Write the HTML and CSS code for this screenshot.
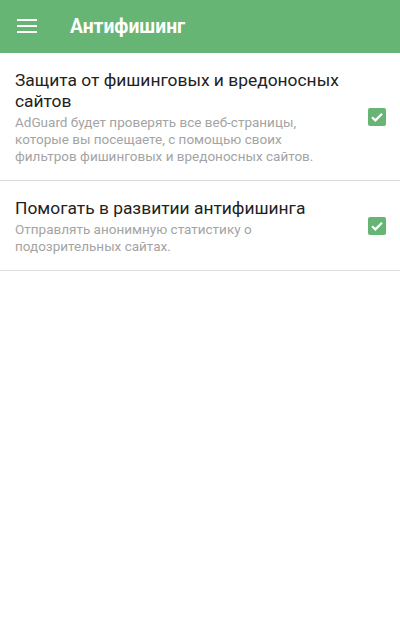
FILE: index.html
```html
<!DOCTYPE html>
<html lang="ru">
<head>
    <meta charset="UTF-8">
    <meta name="viewport" content="width=device-width, initial-scale=1.0">
    <title>Антифишинг</title>
    <link rel="stylesheet" href="styles.css">
</head>
<body>
    <header class="toolbar">
        <svg class="menu-icon" width="20" height="14" viewBox="0 0 20 14">
            <rect x="0" y="0" width="20" height="2" fill="#fff"/>
            <rect x="0" y="6" width="20" height="2" fill="#fff"/>
            <rect x="0" y="12" width="20" height="2" fill="#fff"/>
        </svg>
        <h1 class="toolbar-title">Антифишинг</h1>
    </header>

    <main class="settings">
        <div class="setting">
            <div class="setting-text">
                <div class="setting-title">Защита от фишинговых и вредоносных сайтов</div>
                <div class="setting-summary">AdGuard будет проверять все веб-страницы, которые вы посещаете, с помощью своих фильтров фишинговых и вредоносных сайтов.</div>
            </div>
            <span class="checkbox">
                <svg width="18" height="18" viewBox="0 0 18 18">
                    <path d="M4 9.2 L7.4 12.4 L14 5.8" fill="none" stroke="#fff" stroke-width="2.2"/>
                </svg>
            </span>
        </div>

        <div class="setting">
            <div class="setting-text">
                <div class="setting-title">Помогать в развитии антифишинга</div>
                <div class="setting-summary">Отправлять анонимную статистику о подозрительных сайтах.</div>
            </div>
            <span class="checkbox">
                <svg width="18" height="18" viewBox="0 0 18 18">
                    <path d="M4 9.2 L7.4 12.4 L14 5.8" fill="none" stroke="#fff" stroke-width="2.2"/>
                </svg>
            </span>
        </div>
    </main>
</body>
</html>
```

FILE: styles.css
```css
body {
    margin: 0;
    font-family: Roboto, "Noto Sans", sans-serif;
    background-color: #fff;
}

.toolbar {
    display: flex;
    align-items: center;
    height: 53px;
    padding-left: 17px;
    background-color: #66b574; /* adguard green */
    color: #fff;
}

.menu-icon {
    display: block;
    margin-top: -1px;
}

.toolbar-title {
    margin: 0 0 0 33px;
    font-size: 19.3px;
    font-weight: 700;
}

.setting {
    display: flex;
    align-items: center;
    padding: 17px 14px 15px 15px;
    border-bottom: 1px solid #dcdcdc;
}

.setting-text {
    flex: 1;
    padding-right: 23px;
}

.setting-title {
    font-size: 17.4px;
    line-height: 21px;
    color: #222;
}

.setting-summary {
    margin-top: 2px;
    font-size: 13.5px;
    line-height: 17px;
    color: #a4a4a4;
}

.checkbox {
    display: block;
    width: 18px;
    height: 18px;
    margin-top: -2px;
    border-radius: 2px;
    background-color: #66b574;
}

.checkbox svg {
    display: block;
}
```
